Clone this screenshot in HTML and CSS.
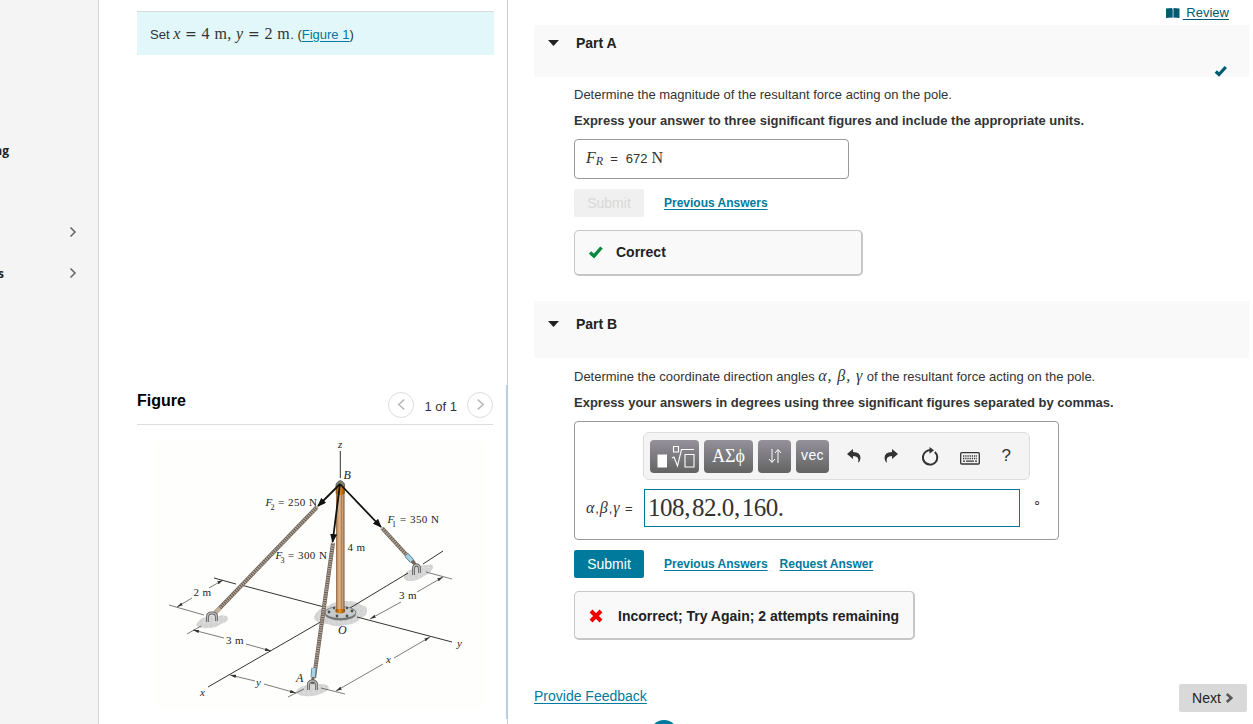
FILE: index.html
```html
<!DOCTYPE html>
<html lang="en">
<head>
    <meta charset="UTF-8">
    <meta name="viewport" content="width=device-width, initial-scale=1.0">
    <title>Resultant Force on a Pole</title>
    <link rel="stylesheet" href="styles.css">
</head>
<body>
    <nav class="sidebar">
        <div class="nav-item first"><span class="nav-text">ng</span></div>
        <div class="nav-item">
            <span class="nav-text"></span>
            <svg class="chevron" viewBox="0 0 8 12"><path d="M1.5 1.5L6 6L1.5 10.5"/></svg>
        </div>
        <div class="nav-item">
            <span class="nav-text">s</span>
            <svg class="chevron" viewBox="0 0 8 12"><path d="M1.5 1.5L6 6L1.5 10.5"/></svg>
        </div>
    </nav>

    <section class="problem">
        <div class="given">Set&nbsp;<span class="math given-math"><i>x</i> <span class="eq">=</span> 4 m, <i>y</i> <span class="eq">=</span> 2 m</span>. (<a href="#">Figure 1</a>)</div>

        <div class="figure-header">
            <h2>Figure</h2>
            <div class="pager">
                <span class="pager-btn"><svg viewBox="0 0 10 14"><path d="M8 1.5L2 7L8 12.5"/></svg></span>
                <span class="pager-text">1 of 1</span>
                <span class="pager-btn"><svg viewBox="0 0 10 14"><path d="M2 1.5L8 7L2 12.5"/></svg></span>
            </div>
        </div>

        <svg class="figure" viewBox="155 430 330 290">
            <defs>
                <linearGradient id="wood" x1="0" x2="1" y1="0" y2="0">
                    <stop offset="0" stop-color="#8f6740"/>
                    <stop offset=".25" stop-color="#d3a67a"/>
                    <stop offset=".5" stop-color="#dfb68d"/>
                    <stop offset=".62" stop-color="#a97a4c"/>
                    <stop offset=".78" stop-color="#cfa173"/>
                    <stop offset="1" stop-color="#765130"/>
                </linearGradient>
                <linearGradient id="cap" x1="0" x2="1" y1="0" y2="0">
                    <stop offset="0" stop-color="#8a4a07"/>
                    <stop offset=".45" stop-color="#e8901f"/>
                    <stop offset="1" stop-color="#8a4a07"/>
                </linearGradient>
                <pattern id="gravel" width="5" height="5" patternUnits="userSpaceOnUse">
                    <rect width="5" height="5" fill="#d6d6d6"/>
                    <circle cx="1" cy="1.2" r=".6" fill="#c2c2c2"/>
                    <circle cx="3.6" cy="2" r=".6" fill="#ececec"/>
                    <circle cx="2.2" cy="4" r=".6" fill="#c6c6c6"/>
                </pattern>
                <marker id="dim" viewBox="0 0 6 4" refX="6" refY="2" markerWidth="6" markerHeight="4" markerUnits="userSpaceOnUse" orient="auto-start-reverse">
                    <path d="M0 .4L6 2L0 3.6z" fill="#333"/>
                </marker>
                <marker id="force" viewBox="0 0 9 7" refX="8" refY="3.5" markerWidth="9" markerHeight="7" markerUnits="userSpaceOnUse" orient="auto">
                    <path d="M0 0L9 3.5L0 7z" fill="#111"/>
                </marker>
            </defs>

            <rect x="155" y="441" width="330" height="268" fill="#fefefd"/>

            <!-- ground patches -->
            <g fill="url(#gravel)">
                <path d="M314 617Q318 607 328 606Q334 601 346 601Q358 601 361 605Q368 606 367 611Q367 617 360 618Q356 625 345 625Q336 628 328 624Q314 623 314 617z"/>
                <path d="M196 625Q198 620 203 618Q210 614 218 616Q226 614 228 618Q228 622 221 624Q216 628 208 628Q199 629 196 625z"/>
                <path d="M404 577Q405 571 412 569Q419 565 427 565Q434 563 433 568Q431 573 424 576Q418 581 410 581Q404 581 404 577z"/>
                <path d="M296 692Q298 687 304 686Q311 682 320 684Q329 684 329 688Q327 692 320 694Q313 697 305 696Q298 696 296 692z"/>
            </g>

            <!-- axes -->
            <g class="axis">
                <path d="M340.300 451V478"/>
                <path d="M214 578L236 584M241 585L324 607"/>
                <path d="M357 617L452 642"/>
                <path d="M208 687L324 620"/>
                <path d="M350 608L408 573M423 564L443 551"/>
            </g>

            <!-- dimension lines -->
            <g class="thin">
                <path d="M169 605L204 615M426 572L452 579"/>
                <path d="M187 634L201 626M288 697L304 689M321 688L345 694"/>
                <path d="M192 598L177 607" marker-end="url(#dim)"/>
                <path d="M209 588L223 580" marker-end="url(#dim)"/>
                <path d="M224 638L193 630" marker-end="url(#dim)"/>
                <path d="M246 644L271 651" marker-end="url(#dim)"/>
                <path d="M255 681L230 675" marker-end="url(#dim)"/>
                <path d="M264 684L296 693" marker-end="url(#dim)"/>
                <path d="M401 602L370 619" marker-end="url(#dim)"/>
                <path d="M417 592L443 577" marker-end="url(#dim)"/>
                <path d="M383 664L336 691" marker-end="url(#dim)"/>
                <path d="M394 658L430 637" marker-end="url(#dim)"/>
            </g>

            <!-- base plate and pole -->
            <ellipse cx="340.500" cy="614" rx="15.500" ry="6.500" fill="#777"/>
            <ellipse cx="340.500" cy="612.500" rx="15.500" ry="6" fill="#c7cacb" stroke="#666" stroke-width=".7"/>
            <g fill="#4b4f52">
                <circle cx="329" cy="612" r="1.400"/>
                <circle cx="337" cy="616" r="1.400"/>
                <circle cx="347" cy="616" r="1.400"/>
                <circle cx="352" cy="611" r="1.400"/>
                <circle cx="334" cy="608" r="1.200"/>
                <circle cx="347" cy="608" r="1.200"/>
            </g>
            <rect x="336" y="488" width="8.500" height="123" fill="url(#wood)"/>
            <path d="M335.500 609h9.500v3q-4.700 3-9.500 0z" fill="url(#cap)"/>
            <path d="M336 487V484q4.500-7 8.500 0v3z" fill="#7d8571" stroke="#333" stroke-width=".6"/>
            <path d="M335.700 486h9v7.500q-4.500 3.500-9 0z" fill="url(#cap)"/>

            <!-- ropes -->
            <path class="rope" d="M317 507L215 613"/>
            <path class="strand" d="M317 507L215 613"/>
            <path class="rope" d="M333 543L314 678"/>
            <path class="strand" d="M333 543L314 678"/>
            <path class="rope" d="M382 528L414 563"/>
            <path class="strand" d="M382 528L414 563"/>
            <path d="M220 608L215 613" stroke="#c3b09c" stroke-width="4"/>
            <path class="sleeve-edge" d="M406.500 555L412 561M314 668L313 677"/>
            <path class="sleeve" d="M406.500 555L412 561M314 668L313 677"/>
            <path d="M412 561L417 566M313 677L312.500 684" stroke="#6f665c" stroke-width="3"/>

            <!-- ground hooks -->
            <g class="hook-edge">
                <path d="M207.500 622V617q0-4 4.500-4t4.500 4v4"/>
                <path d="M413.500 575V569q0-4 3-4t3 4v4"/>
                <path d="M308.500 690V685q0-4 4-4t4 4v5"/>
            </g>
            <g class="hook">
                <path d="M207.500 622V617q0-4 4.500-4t4.500 4v4"/>
                <path d="M413.500 575V569q0-4 3-4t3 4v4"/>
                <path d="M308.500 690V685q0-4 4-4t4 4v5"/>
            </g>

            <!-- forces -->
            <g class="force-line">
                <path d="M340 484L318 506" marker-end="url(#force)"/>
                <path d="M340 484L332.600 542" marker-end="url(#force)"/>
                <path d="M340 484L381 527" marker-end="url(#force)"/>
            </g>

            <g class="fig-text">
                <text x="338" y="448" class="it">z</text>
                <text x="343.500" y="479" class="it big">B</text>
                <text x="338" y="634" class="it big">O</text>
                <text x="296" y="682" class="it big">A</text>
                <text x="200" y="696" class="it">x</text>
                <text x="256" y="686" class="it">y</text>
                <text x="386" y="663" class="it">x</text>
                <text x="457" y="647" class="it">y</text>
                <text x="193.500" y="596" textLength="17.500">2 m</text>
                <text x="226" y="644" textLength="17.500">3 m</text>
                <text x="399" y="599" textLength="17.500">3 m</text>
                <text x="347.500" y="551" textLength="17.500">4 m</text>
                <text x="265.500" y="506" class="it">F</text><text x="270.500" y="510" class="sub">2</text>
                <text x="278" y="506" textLength="39">= 250 N</text>
                <text x="275.500" y="559" class="it">F</text><text x="280.500" y="563" class="sub">3</text>
                <text x="288" y="559" textLength="39">= 300 N</text>
                <text x="387.500" y="523" class="it">F</text><text x="392" y="527" class="sub">1</text>
                <text x="400" y="523" textLength="39">= 350 N</text>
            </g>
        </svg>
    </section>

    <div class="divider"><div class="divider-handle"></div></div>

    <main class="answers">
        <div class="review">
            <svg class="book" viewBox="0 0 14 10"><path d="M0 .5L6 0V9.500L0 10zM7.500 0L13.500 .5V10L7.500 9.500z"/><path d="M6.300 .8v9h.9v-9z"/></svg>
            <a href="#">&nbsp;Review</a>
        </div>

        <div class="part-header part-a">
            <svg class="caret" viewBox="0 0 11 6"><path d="M0 0h11L5.500 6z"/></svg>
            <h3>Part A</h3>
            <svg class="done" viewBox="0 0 14 12"><path d="M1.800 6.500L5 9.500L11.800 2"/></svg>
        </div>
        <div class="part-body">
            <p class="question">Determine the magnitude of the resultant force acting on the pole.</p>
            <p class="instruction">Express your answer to three significant figures and include the appropriate units.</p>
            <div class="answer-box"><span class="math"><i>F</i><i class="small-sub">R</i></span><span class="equals">=</span><span>672</span><span class="math unit">N</span></div>
            <div class="actions">
                <button class="submit disabled" disabled>Submit</button>
                <a href="#">Previous Answers</a>
            </div>
            <div class="feedback correct">
                <svg viewBox="0 0 16 14"><path class="tick" d="M2 7.500L6 11L13.500 2.500"/></svg>
                Correct
            </div>
        </div>

        <div class="part-header part-b">
            <svg class="caret" viewBox="0 0 11 6"><path d="M0 0h11L5.500 6z"/></svg>
            <h3>Part B</h3>
        </div>
        <div class="part-body">
            <p class="question">Determine the coordinate direction angles <span class="math greek">α, β, γ</span> of the resultant force acting on the pole.</p>
            <p class="instruction">Express your answers in degrees using three significant figures separated by commas.</p>
            <div class="editor">
                <div class="toolbar">
                    <span class="key wide"><svg width="40" height="24" viewBox="0 0 40 24">
                        <path d="M2.500 10.500h9.500v13H2.500z" fill="#fff"/>
                        <g fill="none" stroke="#fff" stroke-width="1.100"><path d="M18.500 2.500h5v5.500h-5zM17 14l2-1L22.500 22L26.500 5.500H39M30 10.500h9v12.500h-9z"/></g>
                    </svg></span>
                    <span class="key wide greek-key">ΑΣϕ</span>
                    <span class="key"><svg width="14" height="16" viewBox="0 0 14 16"><path d="M4 1V14M1 11L4 14.500L7 11M10 15V2M7 5L10 1.500L13 5" fill="none" stroke="#fff"/></svg></span>
                    <span class="key vec">vec</span>
                    <div class="tools">
                        <svg width="16" height="16" viewBox="0 0 16 16"><path d="M1 6L7 1V4Q14.500 4 14.500 10Q14.500 13 12 15Q14 8 7 8V11z"/></svg>
                        <svg width="16" height="16" viewBox="0 0 16 16"><path d="M15 6L9 1V4Q1.500 4 1.500 10Q1.500 13 4 15Q2 8 9 8V11z"/></svg>
                        <svg width="18" height="19" viewBox="0 0 18 19"><path d="M13.800 5A7.200 7.200 0 1 1 5 4.500Q7 3 10 3" fill="none" stroke="#333" stroke-width="2"/><path d="M8.500 0L13 3.300L8.500 6.800z"/></svg>
                        <svg class="keyboard" width="20" height="13" viewBox="0 0 20 13"><rect x=".7" y=".7" width="18.600" height="11.300" rx="1" fill="none" stroke="#333" stroke-width="1.300"/><path d="M3 4H17M3 6.500H17" fill="none" stroke="#333" stroke-width="1.400" stroke-dasharray="1.300 .9"/><path d="M3 8.500h2v1.300H3zM6 8.500h8v1.300H6zM15 8.500h2v1.300h-2z"/></svg>
                        <span class="help">?</span>
                    </div>
                </div>
                <div class="entry">
                    <label class="entry-label"><span class="math">α</span>,<span class="math">β</span>,<span class="math">γ</span> =</label>
                    <div class="entry-field">108,<span class="gap"></span>82.0,<span class="gap"></span>160.</div>
                    <span class="degree">∘</span>
                </div>
            </div>
            <div class="actions">
                <button class="submit">Submit</button>
                <a href="#">Previous Answers</a>
                <a href="#">Request Answer</a>
            </div>
            <div class="feedback incorrect">
                <svg viewBox="0 0 16 14"><path class="cross" d="M3 2L13 12M13 2L3 12"/></svg>
                Incorrect; Try Again; 2 attempts remaining
            </div>
        </div>

        <footer class="footer">
            <a href="#">Provide Feedback</a>
            <button class="next">Next <svg viewBox="0 0 10 12"><path d="M2 1.500L7 6L2 10.500"/></svg></button>
        </footer>
        <div class="logo"></div>
    </main>
</body>
</html>
```
FILE: styles.css
```css
* {
    box-sizing: border-box;
}
body {
    display: flex;
    height: 724px;
    margin: 0;
    overflow: hidden;
    background-color: #fff;
    font-family: 'Liberation Sans', Helvetica, Arial, sans-serif;
    font-size: 13px;
    color: #333;
}
a {
    color: #007a9c;
    text-underline-offset: 2px;
}
button {
    border: 0;
    padding: 0;
    font-family: inherit;
}
h2, h3, p {
    margin: 0;
}
.math {
    font-family: 'Liberation Serif', serif;
    font-size: 16px;
}

/* Left navigation */
.sidebar {
    flex: 0 0 99px;
    padding-top: 131px;
    background-color: #f4f4f4;
    border-right: 1px solid #d6d6d6;
}
.nav-item {
    display: flex;
    align-items: center;
    justify-content: space-between;
    height: 41px;
    padding-right: 21px;
    font: bold 12px 'Open Sans', sans-serif;
    color: #222;
}
.nav-item.first {
    margin-bottom: 40px;
}
.nav-text {
    display: flex;
    justify-content: flex-end;
    width: 9px;
    padding-bottom: 3px;
}
.nav-item:last-child .nav-text {
    width: 4px;
    padding-bottom: 1px;
}
.chevron {
    width: 8px;
    height: 12px;
    margin-bottom: 1px;
    fill: none;
    stroke: #666;
    stroke-width: 1.5;
}

/* Problem and figure */
.problem {
    flex: 0 0 408px;
    padding: 11px 13px 0 38px;
}
.given {
    height: 44px;
    padding-left: 13px;
    line-height: 43px;
    white-space: nowrap;
    background-color: #e1f7f9;
    border-top: 1px solid #d5dcdd;
}
.given-math {
    letter-spacing: 0.4px;
}
.eq {
    font-family: 'DejaVu Serif', serif;
    font-size: 14px;
    line-height: 16px;
}
.figure-header {
    display: flex;
    justify-content: space-between;
    height: 38px;
    margin: 332px 1px 5px 0;
    border-bottom: 1px solid #ddd;
}
.figure-header h2 {
    padding-top: 5px;
    font-size: 16px;
    line-height: 18px;
    color: #000;
}
.pager {
    display: flex;
    gap: 10px;
    height: 35px;
    align-items: center;
}
.pager-text {
    padding-top: 4px;
}
.pager-btn {
    display: flex;
    align-items: center;
    justify-content: center;
    width: 26px;
    height: 26px;
    border: 1px solid #ddd;
    border-radius: 50%;
}
.pager-btn svg {
    width: 9px;
    height: 13px;
    fill: none;
    stroke: #bbb;
    stroke-width: 1.8;
}
.figure {
    display: block;
    width: 330px;
    height: 290px;
    margin-left: 18px;
}
.axis {
    stroke: #333;
    stroke-width: 1;
}
.thin {
    stroke: #444;
    stroke-width: 0.7;
}
.rope {
    stroke: #665d54;
    stroke-width: 4;
}
.strand {
    stroke: #b9aa9a;
    stroke-width: 3;
    stroke-dasharray: 1.2 1.1;
}
.sleeve-edge {
    stroke: #537180;
    stroke-width: 5;
}
.sleeve {
    stroke: #a6d2e6;
    stroke-width: 3.6;
}
.hook-edge {
    fill: none;
    stroke: #555;
    stroke-width: 3;
}
.hook {
    fill: none;
    stroke: #b8b8b8;
    stroke-width: 1.6;
}
.force-line {
    stroke: #111;
    stroke-width: 1.8;
}
.fig-text {
    font-family: 'Liberation Serif', serif;
    font-size: 11px;
    fill: #222;
}
.it {
    font-style: italic;
}
.big {
    font-size: 12px;
}
.sub {
    font-size: 8px;
}

.divider {
    flex: 0 0 2px;
    margin-left: -1px;
    padding-top: 385px;
    background: linear-gradient(90deg, transparent 50%, #c8ced6 50%);
}
.divider-handle {
    height: 334px;
    background-color: #b8cde0;
}

/* Answer column */
.answers {
    flex: 1;
    padding: 0 4px 0 26px;
    min-width: 0;
}
.review {
    display: flex;
    justify-content: flex-end;
    align-items: center;
    height: 25px;
    padding-right: 20px;
}
.review a {
    color: #005a70;
}
.book {
    width: 14px;
    height: 10px;
    margin-right: 3px;
    fill: #005a70;
}
.part-header {
    display: flex;
    align-items: flex-start;
    padding: 0 21px 0 14px;
    background-color: #f9f9f9;
}
.part-header h3 {
    flex: 1;
    margin-left: 17px;
    font-size: 14px;
    line-height: 16px;
    color: #222;
}
.part-a {
    height: 52px;
    padding-top: 10px;
}
.part-b {
    height: 57px;
    padding-top: 15px;
}
.caret {
    width: 11px;
    height: 6px;
    margin-top: 5px;
    fill: #222;
}
.done {
    align-self: flex-end;
    width: 14px;
    height: 12px;
    fill: none;
    stroke: #005a70;
    stroke-width: 3.2;
}
.part-body {
    padding: 9px 0 0 40px;
}
.question, .instruction {
    height: 26px;
    line-height: 18px;
    white-space: nowrap;
}
.part-b + .part-body {
    padding-top: 10px;
}
.instruction {
    height: 27px;
    font-weight: bold;
}
.greek {
    font-style: italic;
    letter-spacing: 0.9px;
    line-height: 16px;
}
.answer-box {
    display: flex;
    align-items: baseline;
    width: 275px;
    height: 40px;
    padding: 9px 11px;
    border: 1px solid #999;
    border-radius: 4px;
}
.small-sub {
    position: relative;
    top: 2px;
    font-size: 12px;
}
.equals {
    margin: 0 8px 0 7px;
}
.unit {
    margin-left: 4px;
}
.actions {
    display: flex;
    align-items: center;
    gap: 12px;
    height: 28px;
    margin-top: 10px;
}
.actions a {
    font-size: 12px;
    font-weight: bold;
}
.submit {
    width: 70px;
    height: 28px;
    margin-right: 8px;
    border-radius: 2px;
    background-color: #007a9c;
    font-size: 14px;
    color: #fff;
}
.submit.disabled {
    background-color: #f0f0f0;
    color: #d8d8d8;
}
.feedback {
    display: flex;
    align-items: center;
    margin-top: 13px;
    padding-left: 13px;
    border: 1px solid #c6c6c6;
    border-width: 1px 2px 2px 1px;
    border-radius: 5px;
    background-color: #f9f9f9;
    font-size: 14px;
    font-weight: bold;
    color: #222;
    white-space: nowrap;
}
.feedback svg {
    width: 16px;
    height: 14px;
    fill: none;
}
.tick {
    stroke: #008a3c;
    stroke-width: 3.4;
}
.cross {
    stroke: #f20000;
    stroke-width: 4;
}
.correct {
    width: 289px;
    height: 46px;
    margin-bottom: 25px;
    padding-bottom: 2px;
}
.correct svg {
    margin-right: 12px;
}
.incorrect {
    width: 341px;
    height: 49px;
    padding-top: 1px;
}
.incorrect svg {
    margin-right: 14px;
}

/* Equation editor */
.editor {
    width: 485px;
    height: 119px;
    padding: 10px 10px 0 11px;
    border: 1px solid #999;
    border-radius: 4px;
}
.toolbar {
    display: flex;
    align-items: center;
    gap: 5px;
    width: 387px;
    height: 48px;
    margin-left: 57px;
    padding-left: 6px;
    border: 1px solid #ddd;
    border-radius: 6px;
    background-color: #f4f4f4;
}
.key {
    display: flex;
    align-items: center;
    justify-content: center;
    width: 33px;
    height: 33px;
    border-radius: 4px;
    background: linear-gradient(#94919a, #636363);
    color: #fff;
}
.key.wide {
    width: 49px;
}
.greek-key {
    font-family: 'Liberation Serif', serif;
    font-size: 18px;
}
.vec {
    padding-bottom: 3px;
    font-size: 14px;
    letter-spacing: 0.4px;
}
.tools {
    display: flex;
    flex: 1;
    align-items: center;
    justify-content: space-between;
    padding: 0 18px 0 12px;
    fill: #333;
}
.keyboard {
    margin-top: 4px;
}
.help {
    font-size: 17px;
}
.entry {
    display: flex;
    align-items: center;
    margin-top: 9px;
}
.entry-label {
    width: 58px;
    letter-spacing: 0.9px;
    white-space: nowrap;
}
.entry-label .math {
    font-style: italic;
}
.entry-field {
    width: 376px;
    height: 38px;
    padding-left: 3px;
    border: 1px solid #007a9c;
    font: 25px/36px 'Liberation Serif', serif;
    letter-spacing: -0.45px;
}
.gap {
    display: inline-block;
    width: 2px;
}
.degree {
    margin: -13px 0 0 13px;
}

.footer {
    display: flex;
    justify-content: space-between;
    align-items: center;
    height: 28px;
    margin-top: 44px;
    padding-right: 2px;
    font-size: 14px;
}
.footer a {
    margin-top: -4px;
}
.next {
    display: flex;
    align-items: center;
    justify-content: center;
    width: 68px;
    height: 28px;
    gap: 4px;
    border-radius: 2px;
    background-color: #d9d9d9;
    font-size: 14px;
    color: #222;
}
.next svg {
    width: 9px;
    height: 12px;
    fill: none;
    stroke: #555;
    stroke-width: 2.8;
}
.logo {
    width: 28px;
    height: 28px;
    margin: 8px 0 0 116px;
    border-radius: 50%;
    background-color: #007a9c;
}
```
